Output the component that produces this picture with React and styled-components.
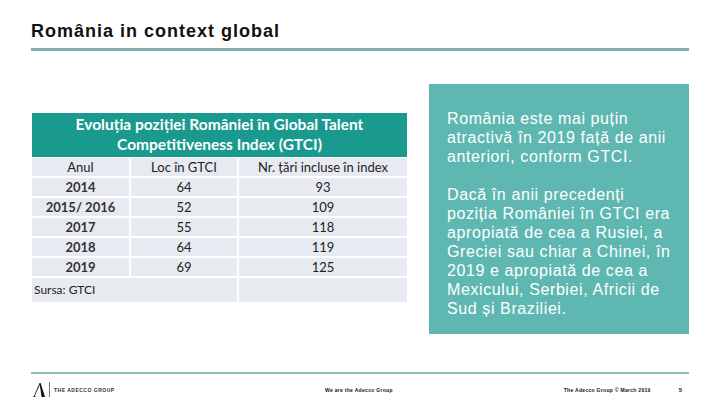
import React from "react";
import styled, { createGlobalStyle } from "styled-components";

const Global = createGlobalStyle`
  html, body { margin: 0; padding: 0; background: #fff; }
  body { font-family: "Liberation Sans", Arial, sans-serif; }
`;

const Page = styled.div`
  width: 720px;
  height: 405px;
  box-sizing: border-box;
  padding: 0 31px;
  display: flex;
  flex-direction: column;
  overflow: hidden;
`;

const Header = styled.header`
  padding-top: 21px;
  padding-bottom: 6px;
  border-bottom: 3px solid #7db1ae;
`;

const Title = styled.h1`
  margin: 0;
  font-family: "Liberation Sans", Arial, sans-serif;
  font-weight: bold;
  font-size: 18px;
  line-height: 21px;
  letter-spacing: 1px;
  color: #111;
`;

const Main = styled.main`
  flex: 1;
  display: flex;
  align-items: flex-start;
  padding-top: 33px;
`;

const TableWrap = styled.div`
  margin-top: 29px;
  margin-left: 1px;
  width: 375px;
`;

const Table = styled.table`
  width: 100%;
  border-collapse: collapse;
  font-family: Lato, "Open Sans", sans-serif;
  table-layout: fixed;
`;

const HeadCell = styled.th`
  background: #1a998f;
  color: #fff;
  font-weight: bold;
  font-size: 15.5px;
  line-height: 20px;
  padding: 1px 0 3px;
  text-align: center;
  border-bottom: 1px solid #fff;
`;

const Cell = styled.td`
  background: #e8eaf2;
  border: 2px solid #fff;
  border-top: 0;
  height: 18px;
  padding: 0;
  font-size: 13px;
  line-height: 18px;
  color: #222;
  text-align: ${(p) => (p.$left ? "left" : "center")};
  font-weight: ${(p) => (p.$bold ? "bold" : "normal")};
  ${(p) => (p.$bold ? "color: #333;" : "")}
  ${(p) => (p.$tall ? "height: 24px; padding-left: 2px; font-size: 12px;" : "")}
  &:first-child { border-left: 0; }
  &:last-child { border-right: 0; }
`;

const Panel = styled.section`
  margin-left: auto;
  width: 260px;
  height: 250px;
  box-sizing: border-box;
  background: #5eb8b1;
  padding: 25px 12px 0 18px;
  color: #fff;
  font-family: "Liberation Sans", Arial, sans-serif;
  font-size: 16px;
  line-height: 19px;
  letter-spacing: 0.6px;
`;

const Para = styled.p`
  margin: 0 0 19px;
`;

const Footer = styled.footer`
  height: 31px;
  border-top: 2px solid #8dbdba;
  display: flex;
  align-items: center;
  padding: 0 2px;
  font-family: "Liberation Sans", Arial, sans-serif;
  color: #111;
  white-space: nowrap;
`;

const Logo = styled.div`
  display: flex;
  align-items: center;
  gap: 4px;
  width: 292px;
  flex: none;
`;

const Divider = styled.span`
  width: 1px;
  height: 15px;
  background: #777;
`;

const LogoText = styled.span`
  font-size: 5px;
  letter-spacing: 0.5px;
  font-weight: bold;
  color: #333;
`;

const FootText = styled.span`
  flex: none;
  font-size: ${(p) => p.$size || 5}px;
  font-weight: bold;
  letter-spacing: 0.3px;
  margin-left: ${(p) => p.$ml || 0}px;
`;

const rows = [
  ["2014", "64", "93"],
  ["2015/ 2016", "52", "109"],
  ["2017", "55", "118"],
  ["2018", "64", "119"],
  ["2019", "69", "125"],
];

export default function App() {
  return (
    <>
      <Global />
      <Page>
        <Header>
          <Title>România in context global</Title>
        </Header>
        <Main>
          <TableWrap>
            <Table>
              <colgroup>
                <col style={{ width: "98px" }} />
                <col style={{ width: "108px" }} />
                <col />
              </colgroup>
              <thead>
                <tr>
                  <HeadCell colSpan={3}>
                    Evoluția poziției României în Global Talent
                    <br />
                    Competitiveness Index (GTCI)
                  </HeadCell>
                </tr>
              </thead>
              <tbody>
                <tr>
                  <Cell>Anul</Cell>
                  <Cell>Loc în GTCI</Cell>
                  <Cell>Nr. țări incluse în index</Cell>
                </tr>
                {rows.map((r) => (
                  <tr key={r[0]}>
                    <Cell $bold>{r[0]}</Cell>
                    <Cell>{r[1]}</Cell>
                    <Cell>{r[2]}</Cell>
                  </tr>
                ))}
                <tr>
                  <Cell colSpan={2} $left $tall>
                    Sursa: GTCI
                  </Cell>
                  <Cell $tall />
                </tr>
              </tbody>
            </Table>
          </TableWrap>
          <Panel>
            <Para>
              România este mai puțin atractivă în 2019 față de anii anteriori,
              conform GTCI.
            </Para>
            <Para>
              Dacă în anii precedenți poziția României în GTCI era apropiată de
              cea a Rusiei, a Greciei sau chiar a Chinei, în 2019 e apropiată de
              cea a Mexicului, Serbiei, Africii de Sud și Braziliei.
            </Para>
          </Panel>
        </Main>
        <Footer>
          <Logo>
            <svg width="12" height="14" viewBox="0 0 12 14">
              <path d="M6.5 0 L7.6 0 L12 14 L8.6 14 Z" fill="#111" />
              <path d="M6.5 0 L0.6 14 L1.4 14 L7 1.2 Z" fill="#111" />
              <path d="M0 14 L3 14 L3 13.5 L0 13.5 Z" fill="#111" />
            </svg>
            <Divider />
            <LogoText>THE ADECCO GROUP</LogoText>
          </Logo>
          <FootText>We are the Adecco Group</FootText>
          <FootText $ml={171}>The Adecco Group © March 2019</FootText>
          <FootText $ml={28} $size={6}>5</FootText>
        </Footer>
      </Page>
    </>
  );
}
